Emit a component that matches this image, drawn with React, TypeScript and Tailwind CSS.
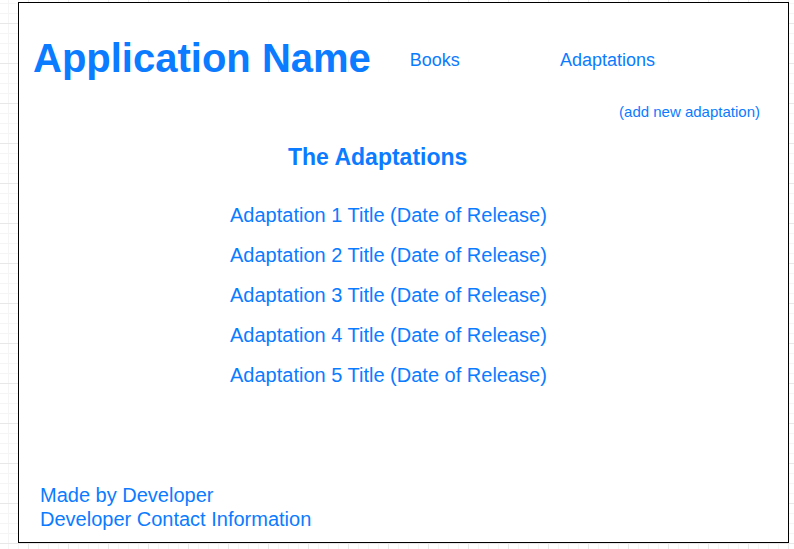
import React from "react";

const blue = "text-[#0b7bff]";

export default function App() {
  const items = [1, 2, 3, 4, 5];
  return (
    <div
      className="w-[794px] h-[549px] overflow-hidden bg-white bg-[image:linear-gradient(to_right,#e8e8e8_1px,transparent_1px),linear-gradient(to_bottom,#e8e8e8_1px,transparent_1px),linear-gradient(to_right,#f5f5f5_1px,transparent_1px),linear-gradient(to_bottom,#f5f5f5_1px,transparent_1px)] bg-[size:40px_40px,40px_40px,10px_10px,10px_10px] bg-[position:28px_23px,28px_23px,8px_3px,8px_3px] pt-[2px] pl-[18px]"
      style={{ fontFamily: '"Liberation Sans", Arial, Helvetica, sans-serif' }}
    >
      <div className="w-[771px] h-[541px] border border-black bg-white flex flex-col">
        <div className="flex items-start mt-[35px] pl-[14px]">
          <div className={`text-[40px] leading-[40px] font-bold whitespace-nowrap ${blue}`}>
            Application Name
          </div>
          <div className={`ml-[39px] mt-[13px] text-[18px] leading-[18px] ${blue}`}>Books</div>
          <div className={`ml-[100px] mt-[13px] text-[18px] leading-[18px] ${blue}`}>Adaptations</div>
        </div>
        <div className="flex justify-end pr-[28px] mt-[26px]">
          <div className={`text-[15px] leading-[15px] ${blue}`}>(add new adaptation)</div>
        </div>
        <div className={`mt-[27px] ml-[269px] text-[23px] leading-[23px] font-bold ${blue}`}>
          The Adaptations
        </div>
        <ul className="mt-[26px] ml-[211px] flex flex-col">
          {items.map((n) => (
            <li key={n} className={`text-[20px] leading-[40px] whitespace-nowrap ${blue}`}>
              Adaptation {n} Title (Date of Release)
            </li>
          ))}
        </ul>
        <div className="mt-[88px] ml-[21px] flex flex-col">
          <div className={`text-[20px] leading-[24px] ${blue}`}>Made by Developer</div>
          <div className={`text-[20px] leading-[24px] ${blue}`}>Developer Contact Information</div>
        </div>
      </div>
    </div>
  );
}
